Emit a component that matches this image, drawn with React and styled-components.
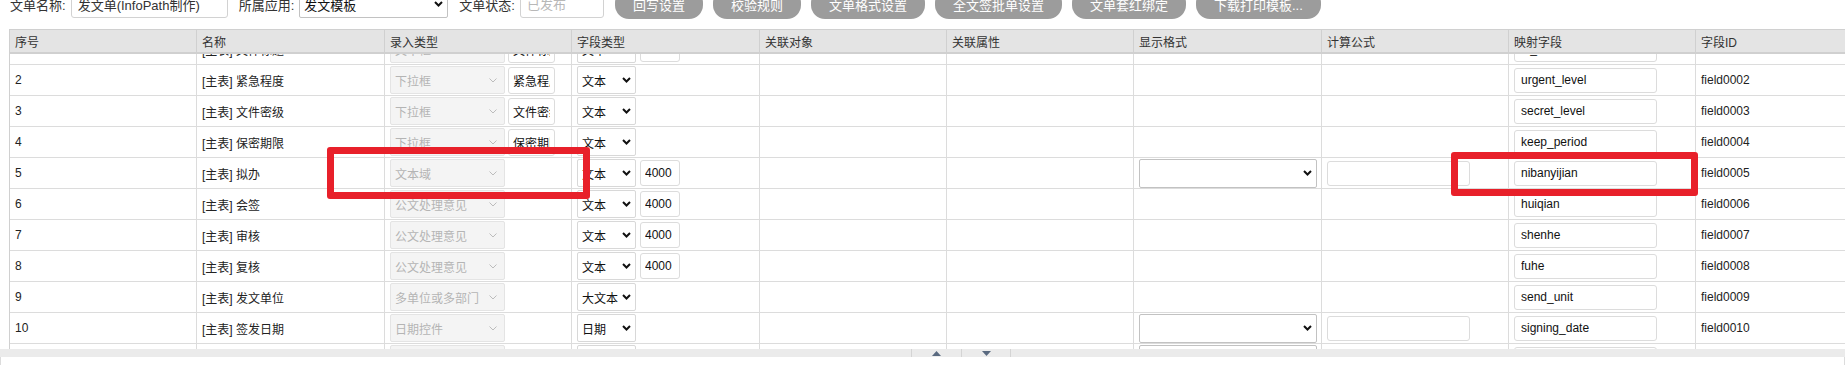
import React, { useLayoutEffect, useRef } from 'react';
import styled, { createGlobalStyle } from 'styled-components';

const GlobalStyle = createGlobalStyle`
	html, body {
		margin: 0;
		padding: 0;
		background: #fff;
	}
	body {
		font-family: "Liberation Sans", Arial, "Noto Sans CJK SC", sans-serif;
		font-size: 12px;
		color: #222;
	}
	* {
		box-sizing: border-box;
	}
`;

const COLS = '187px 188px 187px 188px 187px 187px 188px 187px 187px 187px';

const Page = styled.div`
	position: relative;
	height: 100vh;
	overflow: hidden;
`;

const Toolbar = styled.div`
	display: flex;
	align-items: center;
	height: 40px;
	padding-left: 10px;
	white-space: nowrap;
`;

const Label = styled.span`
	font-size: 13px;
	color: #333;
	margin-right: 5px;
`;

const Field = styled.input`
	width: ${(props) => props.$w}px;
	height: 28px;
	margin-right: 11px;
	padding: 0 6px;
	border: 1px solid #d2d2d2;
	border-radius: 3px;
	font: inherit;
	font-size: 13px;
	color: #333;
	outline: none;

	&::placeholder {
		color: #b8b8b8;
	}
`;

const ToolButton = styled.button`
	height: 30px;
	margin-right: 10px;
	padding: 0 18px;
	border: none;
	border-radius: 14px;
	background: #9c9c9c;
	color: #fff;
	font: inherit;
	font-size: 13px;
`;

const SelectBox = styled.div`
	display: flex;
	flex-shrink: 0;
	align-items: center;
	justify-content: space-between;
	width: ${(props) => props.$w}px;
	height: ${(props) => props.$h || 28}px;
	margin-right: ${(props) => props.$mr || 0}px;
	padding: 0 ${(props) => (props.$disabled ? 7 : 4)}px 0 4px;
	border: 1px solid
		${(props) =>
			props.$disabled ? '#e4e4e4' : props.$strong ? '#c2c2c2' : '#d8d8d8'};
	border-radius: 2px;
	background: ${(props) => (props.$disabled ? '#f4f4f4' : '#fff')};
	color: ${(props) => (props.$disabled ? '#b4b4b4' : '#111')};
	font-size: ${(props) => props.$fs || 12}px;
	overflow: hidden;
`;

const TableWrap = styled.div`
	margin: 5px 0 0 9px;
	border-left: 1px solid #d0d0d0;
	overflow: hidden;
`;

const HeaderRow = styled.div`
	display: grid;
	grid-template-columns: ${COLS};
	height: 25px;
	background: #e4e4e4;
	border-top: 1px solid #d0d0d0;
	border-bottom: 2px solid #d0d0d0;
`;

const HeadCell = styled.div`
	display: flex;
	align-items: center;
	padding-left: 5px;
	border-right: 1px solid #d0d0d0;
	color: #333;
`;

const Body = styled.div`
	height: 295px;
	overflow: hidden;
`;

const Row = styled.div`
	display: grid;
	grid-template-columns: ${COLS};
	height: 31px;
	border-bottom: 1px solid #dcdcdc;
`;

const Cell = styled.div`
	display: flex;
	align-items: center;
	gap: ${(props) => props.$gap || 0}px;
	padding-left: 5px;
	border-right: 1px solid #dcdcdc;
	white-space: nowrap;
	overflow: hidden;
`;

const Box = styled.input`
	flex-shrink: 0;
	width: ${(props) => props.$w}px;
	height: ${(props) => props.$h}px;
	padding: 0 4px 0 ${(props) => props.$pad || 4}px;
	border: 1px solid #dcdcdc;
	border-radius: 3px;
	background: #fff;
	color: #111;
	font: inherit;
	outline: none;
`;

const Pager = styled.div`
	display: flex;
	justify-content: center;
	width: 1922px;
	height: 8px;
	background: #ebebeb;
`;

const PageArrow = styled.div`
	display: flex;
	align-items: center;
	justify-content: center;
	width: 50px;
	height: 8px;
	border-left: 1px solid #d4d4d4;
	border-right: ${(props) => (props.$last ? '1px solid #d4d4d4' : 'none')};
`;

const Footer = styled.div`
	height: 40px;
	border: 1px solid #dcdcdc;
	border-top: none;
`;

const Mark = styled.div`
	position: absolute;
	left: ${(props) => props.$x}px;
	top: ${(props) => props.$y}px;
	width: ${(props) => props.$w}px;
	height: ${(props) => props.$h}px;
	border: 7px solid #e8202a;
	border-radius: 3px;
	pointer-events: none;
`;

const Chevron = ({ thin }) =>
	thin ? (
		<svg width='8' height='5' viewBox='0 0 8 5'>
			<path d='M0.5 0.5L4 4L7.5 0.5' stroke='#bcbcbc' strokeWidth='1' fill='none' />
		</svg>
	) : (
		<svg width='9' height='6' viewBox='0 0 9 6'>
			<path d='M1 1L4.5 4.5L8 1' stroke='#111' strokeWidth='2' fill='none' />
		</svg>
	);

const Select = ({ value, w, h, disabled, strong, fs, mr }) => (
	<SelectBox $w={w} $h={h} $disabled={disabled} $strong={strong} $fs={fs} $mr={mr}>
		<span>{value}</span>
		<Chevron thin={disabled} />
	</SelectBox>
);

const headers = [
	'序号',
	'名称',
	'录入类型',
	'字段类型',
	'关联对象',
	'关联属性',
	'显示格式',
	'计算公式',
	'映射字段',
	'字段ID',
];

const buttons = [
	'回写设置',
	'校验规则',
	'文单格式设置',
	'全文签批单设置',
	'文单套红绑定',
	'下载打印模板...',
];

const rows = [
	{ no: 1, name: '文件标题', input: '文本框', tag: '文件标题', type: '文本', len: '4000', map: 'zt_title', id: 'field0001' },
	{ no: 2, name: '紧急程度', input: '下拉框', tag: '紧急程度', type: '文本', map: 'urgent_level', id: 'field0002' },
	{ no: 3, name: '文件密级', input: '下拉框', tag: '文件密级', type: '文本', map: 'secret_level', id: 'field0003' },
	{ no: 4, name: '保密期限', input: '下拉框', tag: '保密期限', type: '文本', map: 'keep_period', id: 'field0004' },
	{ no: 5, name: '拟办', input: '文本域', type: '文本', len: '4000', format: true, formula: true, map: 'nibanyijian', id: 'field0005' },
	{ no: 6, name: '会签', input: '公文处理意见', type: '文本', len: '4000', map: 'huiqian', id: 'field0006' },
	{ no: 7, name: '审核', input: '公文处理意见', type: '文本', len: '4000', map: 'shenhe', id: 'field0007' },
	{ no: 8, name: '复核', input: '公文处理意见', type: '文本', len: '4000', map: 'fuhe', id: 'field0008' },
	{ no: 9, name: '发文单位', input: '多单位或多部门', type: '大文本', map: 'send_unit', id: 'field0009' },
	{ no: 10, name: '签发日期', input: '日期控件', type: '日期', format: true, formula: true, map: 'signing_date', id: 'field0010' },
	{ no: 11, name: '印发日期', input: '日期控件', type: '日期', format: true, map: 'print_date', id: 'field0011' },
];

const Triangle = ({ down }) => (
	<svg width='9' height='5' viewBox='0 0 9 5'>
		<path d={down ? 'M0 0H9L4.5 5Z' : 'M0 5H9L4.5 0Z'} fill='#5a6a80' />
	</svg>
);

const App = () => {
	const pageRef = useRef(null);
	const bodyRef = useRef(null);

	useLayoutEffect(() => {
		if (pageRef.current) pageRef.current.scrollTop = 16;
		if (bodyRef.current) bodyRef.current.scrollTop = 20;
	}, []);

	return (
		<>
			<GlobalStyle />
			<Page ref={pageRef}>
				<Toolbar>
					<Label>文单名称:</Label>
					<Field $w={157} readOnly value='发文单(InfoPath制作)' />
					<Label>所属应用:</Label>
					<Select value='发文模板' w={149} strong fs={13} mr={11} />
					<Label>文单状态:</Label>
					<Field $w={84} readOnly placeholder='已发布' />
					{buttons.map((b) => (
						<ToolButton key={b}>{b}</ToolButton>
					))}
				</Toolbar>

				<TableWrap>
					<HeaderRow>
						{headers.map((h) => (
							<HeadCell key={h}>{h}</HeadCell>
						))}
					</HeaderRow>
					<Body ref={bodyRef}>
						{rows.map((r) => (
							<Row key={r.no}>
								<Cell>{r.no}</Cell>
								<Cell>[主表] {r.name}</Cell>
								<Cell $gap={3}>
									<Select value={r.input} w={115} disabled />
									{r.tag && <Box $w={47} $h={27} readOnly value={r.tag} />}
								</Cell>
								<Cell $gap={4}>
									<Select value={r.type} w={59} />
									{r.len && <Box $w={40} $h={26} readOnly value={r.len} />}
								</Cell>
								<Cell />
								<Cell />
								<Cell>{r.format && <Select value='' w={178} h={29} strong />}</Cell>
								<Cell>{r.formula && <Box $w={143} $h={25} readOnly value='' />}</Cell>
								<Cell>
									<Box $w={143} $h={25} $pad={6} readOnly value={r.map} />
								</Cell>
								<Cell>{r.id}</Cell>
							</Row>
						))}
					</Body>
				</TableWrap>

				<Pager>
					<PageArrow>
						<Triangle />
					</PageArrow>
					<PageArrow $last>
						<Triangle down />
					</PageArrow>
				</Pager>
				<Footer />

				<Mark $x={327} $y={163} $w={263} $h={52} />
				<Mark $x={1451} $y={168} $w={247} $h={44} />
			</Page>
		</>
	);
};

export default App;
